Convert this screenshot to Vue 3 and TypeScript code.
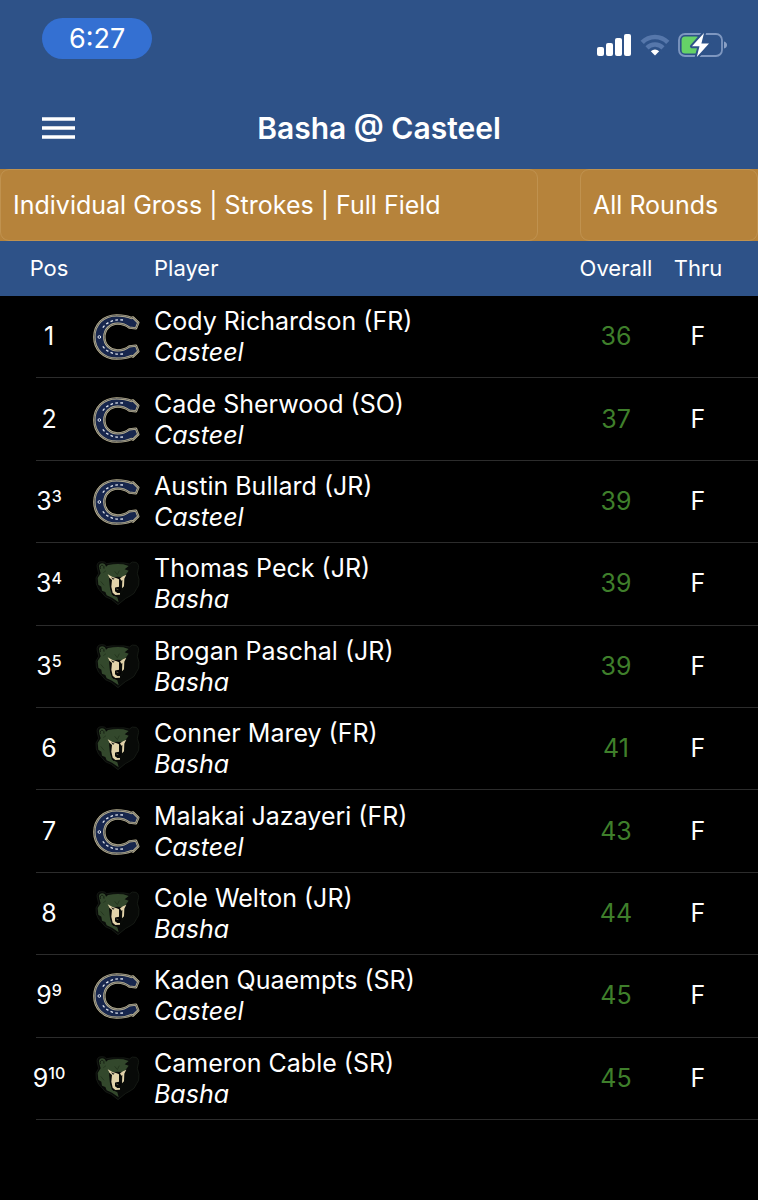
<script setup lang="ts">
import { ref } from 'vue'

type Team = 'Casteel' | 'Basha'

interface Entry {
  pos: string
  tie?: string
  name: string
  team: Team
  overall: number
  thru: string
}

const format = ref('gross')
const round = ref('all')

const entries: Entry[] = [
  { pos: '1', name: 'Cody Richardson (FR)', team: 'Casteel', overall: 36, thru: 'F' },
  { pos: '2', name: 'Cade Sherwood (SO)', team: 'Casteel', overall: 37, thru: 'F' },
  { pos: '3', tie: '3', name: 'Austin Bullard (JR)', team: 'Casteel', overall: 39, thru: 'F' },
  { pos: '3', tie: '4', name: 'Thomas Peck (JR)', team: 'Basha', overall: 39, thru: 'F' },
  { pos: '3', tie: '5', name: 'Brogan Paschal (JR)', team: 'Basha', overall: 39, thru: 'F' },
  { pos: '6', name: 'Conner Marey (FR)', team: 'Basha', overall: 41, thru: 'F' },
  { pos: '7', name: 'Malakai Jazayeri (FR)', team: 'Casteel', overall: 43, thru: 'F' },
  { pos: '8', name: 'Cole Welton (JR)', team: 'Basha', overall: 44, thru: 'F' },
  { pos: '9', tie: '9', name: 'Kaden Quaempts (SR)', team: 'Casteel', overall: 45, thru: 'F' },
  { pos: '9', tie: '10', name: 'Cameron Cable (SR)', team: 'Basha', overall: 45, thru: 'F' },
]

const horseshoe =
  'M98 35 C118 35 132 38 142 43 L147 41 L163 57 L156 74 L136 72 C126 64 114 60 101 60 C77 60 61 78 61 100 ' +
  'C61 122 77 140 101 140 C114 140 126 136 136 128 L156 126 L163 143 L147 159 L142 157 C132 162 118 165 98 165 ' +
  'C58 165 31 137 31 100 C31 63 58 35 98 35 Z'
</script>

<template>
  <div class="screen">
    <header class="top">
      <div class="status">
        <span class="clock">6:27</span>
        <div class="indicators">
          <svg class="signal" viewBox="0 0 35 22" aria-hidden="true">
            <rect x="0" y="13" width="7" height="9" rx="2" />
            <rect x="9" y="9" width="7" height="13" rx="2" />
            <rect x="18" y="4" width="7" height="18" rx="2" />
            <rect x="27" y="0" width="7" height="22" rx="2" />
          </svg>
          <svg class="wifi" viewBox="0 0 30 22" aria-hidden="true">
            <path d="M2.2 8.3 A18 18 0 0 1 27.800 8.3" fill="none" stroke="#5677ab" stroke-width="4.600" />
            <path d="M7 13.800 A11.500 11.500 0 0 1 23 13.800" fill="none" stroke="#5677ab" stroke-width="4.400" />
            <path d="M10.800 17.200 Q15 13.800 19.200 17.200 L15 21.400 Z" fill="#fff" />
          </svg>
          <svg class="battery" viewBox="0 0 50 26" aria-hidden="true">
            <rect x="1" y="2" width="43" height="22" rx="6" fill="none" stroke="#7e97c0" stroke-width="1.800" />
            <path d="M46 9.500 Q49 10.500 49 13 Q49 15.500 46 16.500 Z" fill="#8aa0c5" />
            <rect x="3.600" y="4.600" width="18" height="16.800" rx="3.500" fill="#65d267" />
            <path d="M26 1 L14 14.300 H21.500 L18.800 25 L31 11.600 H23.400 Z" fill="#fff" stroke="#2e5288" stroke-width="4" stroke-linejoin="round" />
            <path d="M26 1 L14 14.300 H21.500 L18.800 25 L31 11.600 H23.400 Z" fill="#fff" />
          </svg>
        </div>
      </div>
      <div class="bar">
        <button class="menu" type="button" aria-label="Menu">
          <svg viewBox="0 0 33 22" aria-hidden="true">
            <path d="M0 2H33M0 11H33M0 20H33" stroke="#fff" stroke-width="3.600" />
          </svg>
        </button>
        <h1>Basha @ Casteel</h1>
      </div>
    </header>

    <div class="filters">
      <select v-model="format" aria-label="Leaderboard">
        <option value="gross">Individual Gross | Strokes | Full Field</option>
      </select>
      <select v-model="round" aria-label="Round">
        <option value="all">All Rounds</option>
      </select>
    </div>

    <table class="board">
      <thead>
        <tr>
          <th class="pos" scope="col">Pos</th>
          <th class="player-head" scope="col">Player</th>
          <th class="overall" scope="col">Overall</th>
          <th class="thru" scope="col">Thru</th>
        </tr>
      </thead>
      <tbody>
        <tr v-for="entry in entries" :key="entry.name">
          <td class="pos">{{ entry.pos }}<sup v-if="entry.tie">{{ entry.tie }}</sup></td>
          <td>
            <div class="player">
              <svg v-if="entry.team === 'Casteel'" class="logo" viewBox="24 28 144 144" aria-hidden="true">
                <path :d="horseshoe" fill="#17264d" stroke="#c0b896" stroke-width="7" stroke-linejoin="round" />
                <path :d="horseshoe" fill="none" stroke="#3a3d48" stroke-width="2" stroke-linejoin="round" />
                <g fill="none" stroke="#dfe4ee">
                  <path d="M117 49 C90 46 66 55 54 76" stroke-width="4" stroke-dasharray="8 7" />
                  <path d="M117 151 C90 154 66 145 54 124" stroke-width="4" stroke-dasharray="8 7" />
                  <circle cx="46" cy="100" r="4" stroke-width="3" />
                </g>
              </svg>
              <svg v-else class="logo" viewBox="24 28 144 144" aria-hidden="true">
                <path d="M40 52 Q36 34 52 33 Q62 32 68 39 Q84 35 102 37 Q122 35 136 40 Q144 31 156 35 Q168 42 162 58 L160 68 Q168 86 164 104 L158 114 L150 128 L138 136 L124 144 L102 162 L82 146 L64 138 L54 126 L44 116 L37 100 L36 82 L44 68 Z" fill="#080a08" stroke="#1d231b" stroke-width="2" />
                <path d="M46 54 Q42 39 54 38 Q63 38 66 48 L72 43 Q96 38 118 41 L134 46 L122 56 L134 60 L124 74 L112 82 L76 82 L78 112 L84 132 L100 140 L104 155 L84 141 L68 134 L64 124 L54 120 L52 108 L43 102 L41 82 L50 68 Z" fill="#33482c" />
                <path d="M49 55 Q47 43 56 44 Q61 46 60 54" fill="none" stroke="#141d11" stroke-width="3" />
                <path d="M58 66 L66 60 M50 92 L60 104 M92 62 L100 72 L106 60" fill="none" stroke="#25371f" stroke-width="3" />
                <path d="M76 82 L100 78 L124 80 L122 112 L112 134 L88 136 L78 112 Z" fill="#0a0c09" />
                <path d="M71 71 L86 79 L98 83 L105 86 L105 108 L93 111 L93 122 L100 127 L108 127 L108 132 L94 133 L86 126 L82 108 L84 88 L77 82 Z" fill="#e2d3aa" />
                <path d="M127 72 L117 77 L108 83 L112 90 L115 88 L114 113 L120 107 L121 84 Z" fill="#e2d3aa" />
                <path d="M81 80 L92 84 L87 87 Z" fill="#111" />
                <path d="M94 111 L110 109 L111 121 L104 124 L95 119 Z" fill="#050505" />
                <path d="M97 115 L103 117" stroke="#817858" stroke-width="2" />
              </svg>
              <div class="who">
                <span>{{ entry.name }}</span>
                <em>{{ entry.team }}</em>
              </div>
            </div>
          </td>
          <td class="overall">{{ entry.overall }}</td>
          <td class="thru">{{ entry.thru }}</td>
        </tr>
      </tbody>
    </table>
  </div>
</template>

<style>
body {
  background: #000;
}
</style>

<style scoped>
.screen {
  min-height: 100vh;
  background: #000;
  color: #fff;
  font-family: Inter, "Liberation Sans", sans-serif;
  font-size: 25px;
}

.top {
  background: #2e5288;
}

.status {
  display: flex;
  justify-content: space-between;
  align-items: flex-start;
  padding: 18px 30px 0 42px;
}

.clock {
  padding: 0 27px;
  border-radius: 21px;
  background: #3470d2;
  font-size: 27px;
  line-height: 41px;
}

.indicators {
  display: flex;
  align-items: center;
  gap: 8px;
  padding-top: 14px;
}

.signal {
  width: 35px;
  height: 22px;
  fill: #fff;
}

.wifi {
  width: 30px;
  height: 22px;
}

.battery {
  width: 50px;
  height: 26px;
}

.bar {
  display: grid;
  grid-template-columns: 1fr auto 1fr;
  align-items: center;
  padding: 39px 42px 11px;
}

.menu {
  justify-self: start;
  padding: 0;
  border: 0;
  background: none;
}

.menu svg {
  display: block;
  width: 33px;
  height: 22px;
}

h1 {
  margin: 0;
  font-size: 30px;
  font-weight: 600;
  line-height: 60px;
}

.filters {
  display: grid;
  grid-template-columns: 1fr 178px;
  gap: 42px;
  background: #b6833b;
}

.filters select {
  appearance: none;
  min-width: 0;
  height: 72px;
  padding: 0 12px;
  border: 1px solid #c0924f;
  border-radius: 9px;
  background: transparent;
  color: #fff;
  font: inherit;
}

.board {
  width: 100%;
  height: 879px;
  border-collapse: collapse;
  table-layout: fixed;
}

.board th,
.board td {
  padding: 0;
  font-weight: 400;
  text-align: center;
}

.board th {
  height: 55px;
  padding-bottom: 2px;
  box-sizing: border-box;
  background: #2e5288;
  font-size: 22px;
}

.board .pos {
  width: 92px;
  padding-left: 6px;
  box-sizing: border-box;
}

.board .player-head {
  padding-left: 62px;
  text-align: left;
}

.board .overall {
  width: 82px;
}

.board .thru {
  width: 101px;
  padding-right: 19px;
  box-sizing: border-box;
}

.board td.pos,
.board td.overall,
.board td.thru {
  padding-bottom: 2px;
}

tbody tr {
  background: linear-gradient(#2c2c2c, #2c2c2c) 36px 100% / 100% 1px no-repeat;
}

td.overall {
  color: #3f7f2b;
}

sup {
  font-size: 16px;
  font-weight: 500;
  line-height: 0;
  vertical-align: 8px;
}

.player {
  display: flex;
  align-items: center;
  gap: 14px;
  text-align: left;
}

.logo {
  flex: none;
  width: 48px;
  height: 48px;
}

.who {
  display: grid;
  line-height: 31px;
  white-space: nowrap;
}
</style>
